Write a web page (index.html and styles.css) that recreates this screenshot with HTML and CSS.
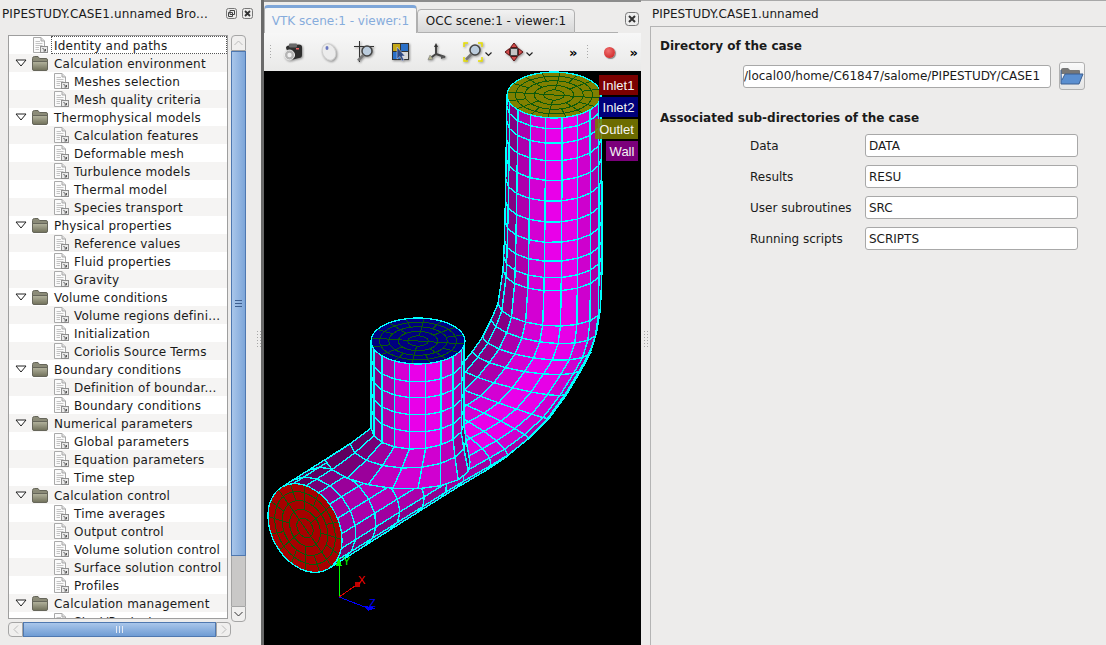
FILE: index.html
```html
<!DOCTYPE html>
<html lang="en">
<head>
    <meta charset="UTF-8">
    <title>PIPESTUDY.CASE1.unnamed</title>
    <link rel="stylesheet" href="styles.css">
</head>
<body>
    <svg class="defs" width="0" height="0">
        <defs>
            <linearGradient id="folderFill" x1="0" y1="0" x2="0" y2="1">
                <stop offset="0" stop-color="#b4b49e"/>
                <stop offset="1" stop-color="#70705a"/>
            </linearGradient>
            <symbol id="doc" viewBox="0 0 16 16">
                <path d="M1.5 .5H9L12.5 4V15.5H1.5Z" fill="#fbfbfb" stroke="#a9a9a9"/>
                <path d="M9 .5V4H12.5" fill="#dcdcdc" stroke="#a9a9a9"/>
                <path d="M3.5 4.5H8M3.5 6.5H10.5M3.5 8.5H10.5M3.5 10.5H7M3.5 12.5H7" stroke="#c4c4c4"/>
                <rect x="8.5" y="9.5" width="7" height="6" fill="#e9e9e9" stroke="#8e8e8e"/>
                <path d="M10.5 11L13.5 14M13.5 12V14H11.5" fill="none" stroke="#555"/>
            </symbol>
            <symbol id="folder" viewBox="0 0 16 16">
                <path d="M.5 3.5Q.5 1.5 2.5 1.5H6L7.5 3.5H14Q15.5 3.5 15.5 5V7H.5Z" fill="#8b8b78" stroke="#66665a"/>
                <path d="M.5 6.5H15.5V14Q15.5 15.5 14 15.5H2Q.5 15.5 .5 14Z" fill="url(#folderFill)" stroke="#66665a"/>
            </symbol>
            <symbol id="open" viewBox="0 0 12 8">
                <path d="M1 1H11L6 7Z" fill="#fff" stroke="#222"/>
            </symbol>
        </defs>
    </svg>

    <div class="app">
        <div class="browser">
            <div class="dock-title">
                <span class="dock-name">PIPESTUDY.CASE1.unnamed Bro...</span>
                <span class="dock-btn">
                    <svg width="11" height="11" viewBox="0 0 11 11"><rect x=".5" y=".5" width="10" height="10" rx="2" fill="none" stroke="#777"/><path d="M4 2.5H8.5V6.5H4ZM2.5 4.5H6.5V8.5H2.5Z" fill="#eee" stroke="#444"/></svg>
                </span>
                <span class="dock-btn">
                    <svg width="11" height="11" viewBox="0 0 11 11"><rect x=".5" y=".5" width="10" height="10" rx="2" fill="none" stroke="#777"/><path d="M3 3L8 8M8 3L3 8" stroke="#333" stroke-width="1.8"/></svg>
                </span>
            </div>
            <div class="tree-wrap">
                <div class="tree-col">
                    <div class="tree">
                        <div class="row top leaf"><svg class="ico"><use href="#doc"/></svg><span class="focus">Identity and paths</span></div>
                        <div class="row top"><svg class="arrow"><use href="#open"/></svg><svg class="ico"><use href="#folder"/></svg><span>Calculation environment</span></div>
                        <div class="row sub"><svg class="ico"><use href="#doc"/></svg><span>Meshes selection</span></div>
                        <div class="row sub"><svg class="ico"><use href="#doc"/></svg><span>Mesh quality criteria</span></div>
                        <div class="row top"><svg class="arrow"><use href="#open"/></svg><svg class="ico"><use href="#folder"/></svg><span>Thermophysical models</span></div>
                        <div class="row sub"><svg class="ico"><use href="#doc"/></svg><span>Calculation features</span></div>
                        <div class="row sub"><svg class="ico"><use href="#doc"/></svg><span>Deformable mesh</span></div>
                        <div class="row sub"><svg class="ico"><use href="#doc"/></svg><span>Turbulence models</span></div>
                        <div class="row sub"><svg class="ico"><use href="#doc"/></svg><span>Thermal model</span></div>
                        <div class="row sub"><svg class="ico"><use href="#doc"/></svg><span>Species transport</span></div>
                        <div class="row top"><svg class="arrow"><use href="#open"/></svg><svg class="ico"><use href="#folder"/></svg><span>Physical properties</span></div>
                        <div class="row sub"><svg class="ico"><use href="#doc"/></svg><span>Reference values</span></div>
                        <div class="row sub"><svg class="ico"><use href="#doc"/></svg><span>Fluid properties</span></div>
                        <div class="row sub"><svg class="ico"><use href="#doc"/></svg><span>Gravity</span></div>
                        <div class="row top"><svg class="arrow"><use href="#open"/></svg><svg class="ico"><use href="#folder"/></svg><span>Volume conditions</span></div>
                        <div class="row sub"><svg class="ico"><use href="#doc"/></svg><span>Volume regions defini...</span></div>
                        <div class="row sub"><svg class="ico"><use href="#doc"/></svg><span>Initialization</span></div>
                        <div class="row sub"><svg class="ico"><use href="#doc"/></svg><span>Coriolis Source Terms</span></div>
                        <div class="row top"><svg class="arrow"><use href="#open"/></svg><svg class="ico"><use href="#folder"/></svg><span>Boundary conditions</span></div>
                        <div class="row sub"><svg class="ico"><use href="#doc"/></svg><span>Definition of boundar...</span></div>
                        <div class="row sub"><svg class="ico"><use href="#doc"/></svg><span>Boundary conditions</span></div>
                        <div class="row top"><svg class="arrow"><use href="#open"/></svg><svg class="ico"><use href="#folder"/></svg><span>Numerical parameters</span></div>
                        <div class="row sub"><svg class="ico"><use href="#doc"/></svg><span>Global parameters</span></div>
                        <div class="row sub"><svg class="ico"><use href="#doc"/></svg><span>Equation parameters</span></div>
                        <div class="row sub"><svg class="ico"><use href="#doc"/></svg><span>Time step</span></div>
                        <div class="row top"><svg class="arrow"><use href="#open"/></svg><svg class="ico"><use href="#folder"/></svg><span>Calculation control</span></div>
                        <div class="row sub"><svg class="ico"><use href="#doc"/></svg><span>Time averages</span></div>
                        <div class="row sub"><svg class="ico"><use href="#doc"/></svg><span>Output control</span></div>
                        <div class="row sub"><svg class="ico"><use href="#doc"/></svg><span>Volume solution control</span></div>
                        <div class="row sub"><svg class="ico"><use href="#doc"/></svg><span>Surface solution control</span></div>
                        <div class="row sub"><svg class="ico"><use href="#doc"/></svg><span>Profiles</span></div>
                        <div class="row top"><svg class="arrow"><use href="#open"/></svg><svg class="ico"><use href="#folder"/></svg><span>Calculation management</span></div>
                        <div class="row sub"><svg class="ico"><use href="#doc"/></svg><span>Start/Restart</span></div>
                    </div>
                    <div class="hbar">
                        <div class="sb-btn h-left"><svg width="6" height="9" viewBox="0 0 6 9"><path d="M5 .5L1 4.5L5 8.5" fill="none" stroke="#bbb"/></svg></div>
                        <div class="hbar-handle"><span class="grip-v"></span></div>
                        <div class="sb-btn h-right"><svg width="6" height="9" viewBox="0 0 6 9"><path d="M1 .5L5 4.5L1 8.5" fill="none" stroke="#bbb"/></svg></div>
                    </div>
                </div>
                <div class="vbar">
                    <div class="sb-btn v-up"><svg width="9" height="6" viewBox="0 0 9 6"><path d="M.5 5L4.5 1L8.5 5" fill="none" stroke="#bbb"/></svg></div>
                    <div class="vbar-handle"><span class="grip-h"></span></div>
                    <div class="vbar-trough"></div>
                    <div class="sb-btn v-down"><svg width="9" height="6" viewBox="0 0 9 6"><path d="M.5 1L4.5 5L8.5 1" fill="none" stroke="#333"/></svg></div>
                </div>
            </div>
        </div>
        <div class="split"><span class="split-dots"></span></div>
        <div class="line"></div>

        <div class="viewer">
            <div class="tabs">
                <div class="tab active">VTK scene:1 - viewer:1</div>
                <div class="tab">OCC scene:1 - viewer:1</div>
                <div class="tab-line"></div>
                <div class="tab-close">
                    <svg width="14" height="14" viewBox="0 0 14 14"><rect x=".5" y=".5" width="13" height="13" rx="3" fill="#eee" stroke="#777"/><path d="M4 4L10 10M10 4L4 10" stroke="#333" stroke-width="2"/></svg>
                </div>
            </div>
            <div class="toolbar">
                <span class="tb-grip first-grip"></span>
                <span class="tool">
                    <svg width="20" height="20" viewBox="0 0 20 20"><path d="M3 6Q3 3.5 6 3.5L16 2.5Q19 2.5 19 5V13Q19 16 16 16L8 18Z" fill="#2e2e2e"/><rect x="6" y="1.5" width="8" height="4" rx="1" fill="#6a6a6a"/><circle cx="6.5" cy="13" r="5" fill="#b4b4b4" stroke="#eee"/><circle cx="6.5" cy="13" r="2.2" fill="#f0f0f0"/><rect x="13" y="6" width="3" height="1.5" fill="#e66"/></svg>
                </span>
                <span class="tool">
                    <svg width="18" height="20" viewBox="0 0 18 20"><ellipse cx="9" cy="10" rx="6.5" ry="8.5" transform="rotate(-25 9 10)" fill="#ececec" stroke="#cfcfcf"/><ellipse cx="7" cy="6" rx="1.5" ry="2" fill="#6a78c0"/></svg>
                </span>
                <span class="tool">
                    <svg width="22" height="22" viewBox="0 0 22 22"><path d="M0 5.5H20M5.5 0V21" stroke="#333"/><circle cx="13" cy="10" r="5" fill="#bcd" stroke="#444" stroke-width="1.5"/><path d="M9.5 14L4 19.5" stroke="#777" stroke-width="2.5"/></svg>
                </span>
                <span class="tool">
                    <svg width="20" height="20" viewBox="0 0 20 20"><rect x="1" y="1" width="17" height="17" fill="#333"/><rect x="2" y="2" width="7" height="7" fill="#c4a818"/><rect x="10" y="2" width="7" height="7" fill="#2a70c8"/><rect x="2" y="10" width="7" height="7" fill="#2a70c8"/><rect x="10" y="10" width="7" height="7" fill="#d8d8d8"/><path d="M6 5V17L9 14.5L11 19L13 18L11 14H14Z" fill="#304a80" stroke="#dde" stroke-width=".5"/></svg>
                </span>
                <span class="tool">
                    <svg width="20" height="20" viewBox="0 0 20 20"><path d="M9 3V12L2 17M9 12L18 15" fill="none" stroke="#444" stroke-width="2"/><path d="M9 1L7 5H11Z" fill="#333"/><path d="M19 15L14 13V17Z" fill="#555"/><path d="M1 18L3 13L6 17Z" fill="#b8b890" stroke="#777" stroke-width=".5"/></svg>
                </span>
                <span class="tool has-menu">
                    <svg width="20" height="20" viewBox="0 0 20 20"><path d="M1 5V1H5M15 1H19V5M1 15V19H5M15 19H19V15" fill="none" stroke="#e8e000" stroke-width="1.5"/><circle cx="12" cy="8" r="5" fill="#bcd" stroke="#444" stroke-width="1.5"/><path d="M8.5 12L3 17.5" stroke="#777" stroke-width="2.5"/></svg>
                    <svg class="caret" width="7" height="5" viewBox="0 0 7 5"><path d="M.5 .5L3.5 3.5L6.5 .5" fill="none" stroke="#222" stroke-width="1.2"/></svg>
                </span>
                <span class="tool has-menu pan">
                    <svg width="20" height="20" viewBox="0 0 20 20"><path d="M10 1L13.5 5.5H6.500ZM10 19L13.500 14.500H6.500ZM1 10L5.500 6.500V13.500ZM19 10L14.500 6.500V13.500Z" fill="#d24a4a" stroke="#5a1515"/><rect x="6.500" y="6.500" width="7" height="7" fill="#c4c4c4" stroke="#444"/></svg>
                    <svg class="caret" width="7" height="5" viewBox="0 0 7 5"><path d="M.5 .5L3.5 3.5L6.5 .5" fill="none" stroke="#222" stroke-width="1.2"/></svg>
                </span>
                <span class="more first-more">»</span>
                <span class="tb-grip"></span>
                <span class="rec"></span>
                <span class="more">»</span>
            </div>
            <div class="scene">
                <svg id="mesh" class="mesh" width="377" height="574" viewBox="264 71 377 574"></svg>
                <div class="legend">
                    <div class="tag inlet1">Inlet1</div>
                    <div class="tag inlet2">Inlet2</div>
                    <div class="tag outlet">Outlet</div>
                    <div class="tag wall">Wall</div>
                </div>
            </div>
        </div>
        <div class="split right-split"><span class="split-dots"></span></div>

        <div class="props">
            <div class="props-title">PIPESTUDY.CASE1.unnamed</div>
            <div class="frame">
                <div class="section-title">Directory of the case</div>
                <div class="dir-row">
                    <input class="field path" value="/local00/home/C61847/salome/PIPESTUDY/CASE1">
                    <button class="browse">
                        <svg width="24" height="20" viewBox="0 0 24 20"><path d="M1 4Q1 2 3 2H8L10 4H19Q20 4 20 5V8H1Z" fill="#777"/><path d="M1 4V18H19L23 8H5L2 14" fill="#5b8fd0" stroke="#3d5f90"/></svg>
                    </button>
                </div>
                <div class="section-title second">Associated sub-directories of the case</div>
                <div class="sub-grid">
                    <label>Data</label><input class="field" value="DATA">
                    <label>Results</label><input class="field" value="RESU">
                    <label>User subroutines</label><input class="field" value="SRC">
                    <label>Running scripts</label><input class="field" value="SCRIPTS">
                </div>
            </div>
        </div>
    </div>
    <script src="script.js"></script>
</body>
</html>
```

FILE: styles.css
```css
* {
    box-sizing: border-box;
}
body {
    margin: 0;
    height: 645px;
    overflow: hidden;
    background-color: #edeceb;
    font-family: "DejaVu Sans", sans-serif;
    font-size: 12px;
    color: #1a1a1a;
}
.defs {
    position: absolute;
}
.app {
    display: flex;
    height: 645px;
}

/* left dock */
.browser {
    width: 255px;
    flex: none;
}
.dock-title {
    display: flex;
    align-items: center;
    height: 27px;
    padding-left: 2px;
    padding-right: 2px;
    gap: 5px;
}
.dock-name {
    flex: 1;
    white-space: nowrap;
    letter-spacing: .13px;
}
.dock-btn {
    display: flex;
}
.tree-wrap {
    display: flex;
    margin: 8px 0 0 8px;
}
.tree-col {
    width: 223px;
}
.tree {
    width: 220px;
    height: 584px;
    border: 1px solid #9e9e9e;
    background-color: #fff;
    overflow: hidden;
}
.row {
    display: flex;
    align-items: center;
    height: 18px;
    white-space: nowrap;
    letter-spacing: .2px;
}
.row span {
    padding-top: 2px;
}
.row:nth-child(even) {
    background-color: #f5f4f3;
}
.row.top {
    padding-left: 6px;
}
.row.top .ico {
    margin-right: 6px;
}
.row.leaf {
    padding-left: 23px;
}
.row.sub {
    padding-left: 44px;
}
.ico {
    width: 16px;
    height: 16px;
    flex: none;
    margin-right: 5px;
}
.arrow {
    width: 12px;
    height: 8px;
    flex: none;
    margin-right: 5px;
}
.row .focus {
    flex: 1;
    height: 18px;
    line-height: 18px;
    padding-top: 0;
    margin-left: -3px;
    padding-left: 2px;
    border: 1px dotted #555;
}
.hbar {
    display: flex;
    height: 15px;
    margin-top: 3px;
}
.sb-btn {
    display: flex;
    align-items: center;
    justify-content: center;
    flex: none;
    background-color: #f0efee;
    border: 1px solid #a5a5a5;
}
.h-left,
.h-right {
    width: 15px;
}
.h-left {
    border-radius: 4px 0 0 4px;
}
.h-right {
    border-radius: 0 4px 4px 0;
}
.hbar-handle {
    flex: 1;
    display: flex;
    align-items: center;
    justify-content: center;
    background: linear-gradient(#a9c6ea, #6f9cd4);
    border: 1px solid #4f78b0;
}
.grip-v {
    width: 7px;
    height: 7px;
    background: repeating-linear-gradient(to right, #e4ebf6 0 1px, transparent 1px 3px);
}
.vbar {
    display: flex;
    flex-direction: column;
    width: 15px;
    height: 587px;
}
.v-up,
.v-down {
    height: 16px;
}
.v-up {
    border-radius: 4px 4px 0 0;
}
.v-down {
    border-radius: 0 0 4px 4px;
}
.vbar-handle {
    display: flex;
    align-items: center;
    justify-content: center;
    height: 505px;
    background: linear-gradient(to right, #a9c6ea, #7ea6d9);
    border: 1px solid #4f78b0;
}
.grip-h {
    width: 7px;
    height: 7px;
    background: repeating-linear-gradient(#3e5f90 0 1px, transparent 1px 3px);
}
.vbar-trough {
    flex: 1;
    background-color: #c9c8c7;
    border-left: 1px solid #a5a5a5;
    border-right: 1px solid #a5a5a5;
}

/* splitters */
.split {
    width: 6px;
    flex: none;
    display: flex;
    align-items: center;
    justify-content: center;
}
.right-split {
    width: 9px;
    border-top: 1px solid #a8a8a8;
}
.split-dots {
    width: 5px;
    height: 18px;
    margin-top: 32px;
    background: radial-gradient(circle, #a8a8a8 0 .8px, transparent 1px) 0 0 / 3px 3px;
}
.line {
    width: 3px;
    flex: none;
    background-color: #6a6a6a;
}

/* centre viewer */
.viewer {
    width: 377px;
    flex: none;
    display: flex;
    flex-direction: column;
    border-top: 2px solid #8c8c8c;
}
.tabs {
    display: flex;
    align-items: flex-end;
    height: 31px;
    padding-top: 2px;
}
.tab {
    height: 24px;
    width: 158px;
    padding-top: 4px;
    text-align: center;
    white-space: nowrap;
    background: linear-gradient(#f2f2f2, #d8d8d8);
    border: 1px solid #b0b0b0;
    border-bottom: 1px solid #b0b0b0;
    border-radius: 4px 4px 0 0;
}
.tab.active {
    width: 153px;
    height: 28px;
    padding-top: 6px;
    color: #86acdc;
    background: #f6f6f6;
    border-top: 3px solid #7ea6d9;
    border-bottom: none;
}
.tab-line {
    width: 43px;
    border-bottom: 1px solid #b0b0b0;
}
.tab-close {
    margin-left: auto;
    margin-right: 2px;
    align-self: center;
    display: flex;
}
.toolbar {
    display: flex;
    align-items: center;
    height: 38px;
    background: linear-gradient(#f7f7f7, #e9e9e8);
    padding-left: 5px;
}
.tb-grip {
    width: 3px;
    height: 16px;
    flex: none;
    background: radial-gradient(circle, #aaa 0 .6px, transparent .8px) 0 0 / 3px 3px;
}
.first-grip {
    margin-right: 3px;
}
.tool {
    display: flex;
    align-items: center;
    justify-content: center;
    width: 36px;
    height: 26px;
    flex: none;
    position: relative;
}
.tool > svg:first-child {
    filter: drop-shadow(1px 1px 1px rgba(0, 0, 0, .4));
}
.tool.pan {
    margin-left: 5px;
}
.caret {
    position: absolute;
    right: -1px;
    top: 13px;
}
.more {
    font-size: 13px;
    font-weight: bold;
    line-height: 13px;
    color: #000;
}
.first-more {
    margin-left: 37px;
    margin-right: 9px;
}
.rec {
    width: 11px;
    height: 11px;
    flex: none;
    margin-left: 15px;
    margin-right: 14px;
    border-radius: 50%;
    background: radial-gradient(circle at 40% 35%, #f07070, #c81818);
    box-shadow: 1px 1px 1px rgba(0, 0, 0, .45);
}
.scene {
    flex: 1;
    position: relative;
    background-color: #000;
    overflow: hidden;
}
.mesh {
    display: block;
}
.legend {
    position: absolute;
    top: 4px;
    right: 3px;
    display: flex;
    flex-direction: column;
    align-items: flex-end;
    gap: 2px;
}
.tag {
    height: 20px;
    line-height: 21px;
    font-family: "Liberation Sans", sans-serif;
    font-size: 13px;
    color: #f4f4f4;
    text-align: center;
}
.inlet1 {
    width: 39px;
    background-color: #7b0000;
}
.inlet2 {
    width: 39px;
    background-color: #00007b;
}
.outlet {
    width: 43px;
    background-color: rgba(123, 123, 0, .88);
}
.wall {
    width: 32px;
    background-color: #7b007b;
}
.ax {
    font-family: "Liberation Sans", sans-serif;
    font-size: 11px;
}

/* right panel */
.props {
    flex: 1;
    border-top: 1px solid #a8a8a8;
}
.props-title {
    height: 25px;
    line-height: 26px;
    padding-left: 2px;
}
.frame {
    height: 619px;
    padding: 11px 0 0 9px;
    border-left: 1px solid #b4b4b4;
    border-top: 1px solid #b4b4b4;
}
.section-title {
    font-weight: bold;
    height: 16px;
    line-height: 16px;
}
.section-title.second {
    margin-top: 20px;
}
.dir-row {
    display: flex;
    align-items: center;
    gap: 8px;
    margin: 8px 0 0 83px;
    height: 28px;
}
.field {
    height: 23px;
    padding: 0 3px;
    font-family: "DejaVu Sans", sans-serif;
    font-size: 12px;
    color: #1a1a1a;
    background-color: #fff;
    border: 1px solid #a8a8a8;
    border-radius: 3px;
    outline: none;
}
.path {
    width: 308px;
    padding: 0 2px 0 0;
}
.browse {
    display: flex;
    align-items: center;
    justify-content: center;
    width: 26px;
    height: 28px;
    padding: 0;
    background: linear-gradient(#fafafa, #e4e4e4);
    border: 1px solid #b0b0b0;
    border-radius: 3px;
}
.sub-grid {
    display: grid;
    grid-template-columns: 115px 213px;
    row-gap: 8px;
    align-items: center;
    margin: 8px 0 0 90px;
}
```

FILE: script.js
```js
// draws the pipe mesh into the svg, coordinates are page pixels
var svg = document.getElementById('mesh');
var out = [];

function pts(list) {
    return list.map(function (p) { return p[0].toFixed(1) + ',' + p[1].toFixed(1); }).join(' ');
}

// section = [Lx, Ly, Rx, Ry, Bx, By]
function point(sec, t) {
    var cx = (sec[0] + sec[2]) / 2, cy = (sec[1] + sec[3]) / 2;
    var ax = (sec[2] - sec[0]) / 2, ay = (sec[3] - sec[1]) / 2;
    return [cx + ax * Math.cos(t) + sec[4] * Math.sin(t), cy + ay * Math.cos(t) + sec[5] * Math.sin(t)];
}

function catmull(a, b, c, d, u) {
    return a.map(function (_, i) {
        return 0.5 * (2 * b[i] + (c[i] - a[i]) * u + (2 * a[i] - 5 * b[i] + 4 * c[i] - d[i]) * u * u + (3 * b[i] - a[i] - 3 * c[i] + d[i]) * u * u * u);
    });
}

function stations(keys, steps) {
    var res = [];
    for (var i = 0; i < keys.length - 1; i++) {
        var a = keys[Math.max(i - 1, 0)], b = keys[i], c = keys[i + 1], d = keys[Math.min(i + 2, keys.length - 1)];
        for (var j = 0; j < steps[i]; j++) res.push(catmull(a, b, c, d, j / steps[i]));
    }
    res.push(keys[keys.length - 1]);
    return res;
}

// fills first, then the lines on top, so a fill never eats a neighbour's line
function tube(secs, divs, dim) {
    var lines = [];
    for (var i = 0; i < secs.length - 1; i++) {
        for (var j = 0; j < divs; j++) {
            var t0 = Math.PI * j / divs, t1 = Math.PI * (j + 1) / divs;
            var light = Math.pow(Math.max(Math.sin((t0 + t1) / 2 + 0.15), 0), 1.6);
            var v = Math.round((105 + 130 * light) * dim(i));
            var quad = pts([point(secs[i], t0), point(secs[i], t1), point(secs[i + 1], t1), point(secs[i + 1], t0)]);
            out.push('<polygon points="' + quad + '" fill="rgb(' + v + ',0,' + v + ')" stroke="rgb(' + v + ',0,' + v + ')"/>');
            lines.push('<polygon points="' + quad + '" fill="none" stroke="#0ff" stroke-width="1.4"/>');
        }
    }
    out = out.concat(lines);
}

function cap(sec, fill) {
    var ring = [], i, k;
    for (i = 0; i < 48; i++) ring.push(point(sec, i * Math.PI / 24));
    out.push('<polygon points="' + pts(ring) + '" fill="' + fill + '"/>');
    var cx = (sec[0] + sec[2]) / 2, cy = (sec[1] + sec[3]) / 2;
    function scaled(r, t) {
        var p = point(sec, t);
        return [cx + (p[0] - cx) * r, cy + (p[1] - cy) * r];
    }
    [0.22, 0.42, 0.62, 0.82].forEach(function (r) {
        var l = [];
        for (k = 0; k < 36; k++) l.push(scaled(r, k * Math.PI / 18));
        out.push('<polygon points="' + pts(l) + '" fill="none" stroke="#0b5a0b"/>');
    });
    // only a few spokes reach the middle
    for (k = 0; k < 16; k++) {
        var t = k * Math.PI / 8 + 0.13;
        var from = k % 8 === 0 ? 0 : (k % 4 === 0 ? 0.22 : (k % 2 === 0 ? 0.42 : 0.62));
        out.push('<polyline points="' + pts([scaled(from, t), scaled(1, t)]) + '" fill="none" stroke="#0b5a0b"/>');
    }
    out.push('<polygon points="' + pts(ring) + '" fill="none" stroke="#0ff" stroke-width="1.3"/>');
}

var mainKeys = [
    [507, 95, 601, 95, 0, 23],
    [503, 270, 602, 270, 0, 21],
    [491, 320, 597, 330, 5, 18],
    [472, 352, 582, 366, 7, 14],
    [445, 382, 548, 418, 11, 6],
    [416, 403, 505, 458, 16, -4],
    [375, 428, 458, 487, 24, -12],
    [282, 487, 328, 569, 29, -17]
];
var mainSecs = stations(mainKeys, [10, 2, 2, 2, 2, 2, 6]);
tube(mainSecs, 9, function (i) {
    return i > 18 ? 1 - 0.045 * (i - 18) : 1;
});

// inlet2 cylinder, the last two stations fan out over the main pipe
var branch = [];
[341, 359, 375, 392, 409].forEach(function (y) {
    branch.push([371, y, 464, y, 0, 23]);
});
branch.push([371, 428, 464, 424, 0, 23]);
branch.push([350, 444, 466, 440, 4, 26]);
branch.push([325, 460, 470, 462, 8, 28]);
tube(branch, 9, function (i) {
    return i > 4 ? 0.9 : 1;
});

cap(mainKeys[0], '#808000');
cap([371, 341, 465, 341, 0, 23], '#000080');
cap([282, 487, 328, 569, 29, -17], '#a80000');

// axes
out.push('<line x1="339" y1="597" x2="339" y2="560" stroke="#0f0"/><polygon points="339,557 336,566 342,566" fill="#0f0"/>');
out.push('<line x1="339" y1="597" x2="358" y2="584" stroke="#e00000"/><rect x="355" y="582" width="5" height="5" fill="#c00000"/>');
out.push('<line x1="339" y1="597" x2="370" y2="609" stroke="#0000ff"/><polygon points="365,606 376,608 368,611" fill="#0000ff"/>');
out.push('<text x="343" y="565" class="ax" fill="#0f0">Y</text><text x="358" y="584" class="ax" fill="#f00">X</text><text x="369" y="607" class="ax" fill="#00f">Z</text>');

svg.innerHTML = out.join('');
svg.setAttribute('shape-rendering', 'crispEdges');
```
